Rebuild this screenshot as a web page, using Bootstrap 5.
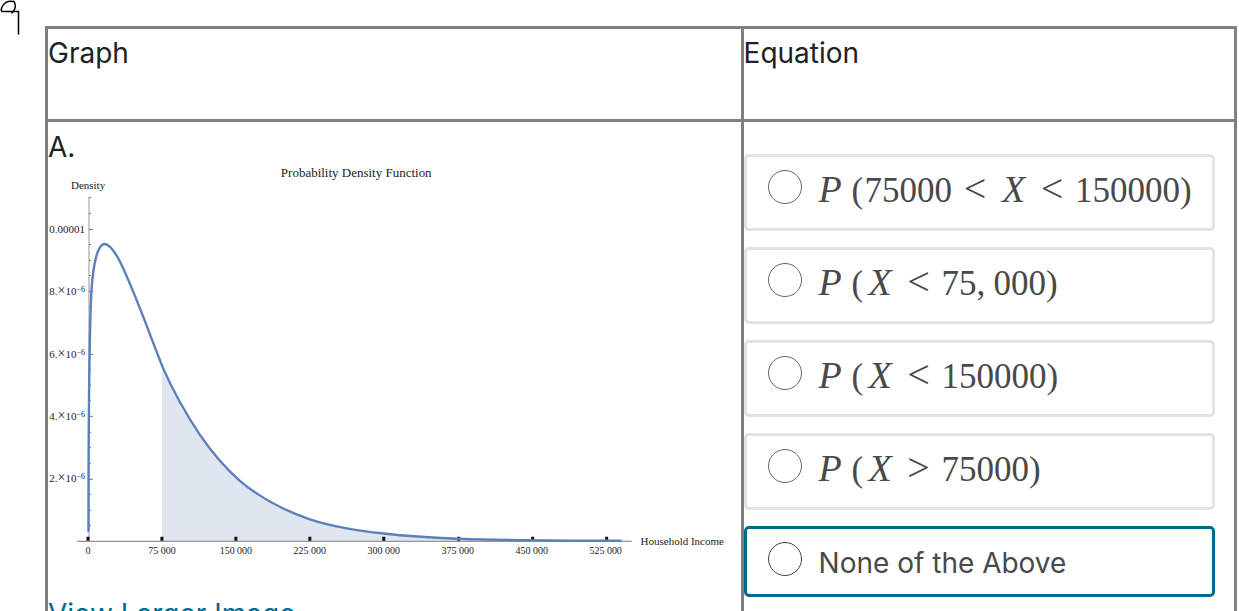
<!DOCTYPE html>
<html lang="en">
<head>
<meta charset="utf-8">
<meta name="viewport" content="width=device-width, initial-scale=1">
<title>Probability Density Function</title>
<link href="https://cdn.jsdelivr.net/npm/bootstrap@5.3.0/dist/css/bootstrap.min.css" rel="stylesheet">
<style>
  body { font: 400 28px/42px Inter, sans-serif; color: #202122; background: #fff; }
  .question-number { width: 45px; flex: none; }
  .sheet { padding: 26px 2px 0 0; }
  .match-table { border-collapse: collapse; table-layout: fixed; color: inherit; }
  .match-table th, .match-table td { border: 3px solid #808080; padding: 7px 0 0; font-weight: 400; vertical-align: top; text-align: left; }
  .match-table th { height: 93px; padding-top: 3px; }
  .graph-col { width: 58.5%; }
  .match-table td.answers { padding: 32px 19px 32px 0; }
  .row-name { line-height: 36px; }
  .larger-link { color: #006a8e; }
  .answer { border: 3px solid #e3e3e3; border-radius: 5px; height: 77px; padding: 0 21px; color: #494949; cursor: pointer; }
  .answer.focused { border-color: #006a8e; height: 71px; }
  .answer .form-check-input { width: 34px; height: 34px; margin: 13px 17px 0 0; border: 1px solid #666; flex: none; float: none; }
  .answer.focused .form-check-input { border-color: #444; }
  .answer-text { margin-top: 13px; }
  .formula { font: 35px/42px "Liberation Serif", serif; margin-top: 11px; white-space: nowrap; }
  .formula span, .formula i { display: inline-block; line-height: 42px; }
  .formula i { font-size: 38px; }
  .formula .fn { width: 33px; }
  .formula .var { width: 31px; text-align: center; }
  .formula .paren { width: 13px; }
  .formula .rel { width: 46px; text-align: center; font-size: 40px; }
  .formula .sep { width: 17px; }
  .chart { font-family: "Liberation Serif", serif; font-size: 10px; font-weight: 400; fill: #222; }
  .chart .title { font-size: 13px; }
  .chart .label, .chart .density { font-size: 11px; }
  .chart .times { font-size: 14px; }
  .chart .exp { font-size: 8px; }
</style>
</head>
<body>
<main class="d-flex vh-100 overflow-hidden">
  <svg class="question-number" height="40" viewBox="0 0 45 40" fill="none" stroke="#000" stroke-width="1.5" stroke-linecap="round" stroke-linejoin="round" role="img" aria-label="9">
    <path d="M14 1.500C9 .5 4.500 2.500 2.500 6C1 9 1 11 2 11.500L18.500 11.500V34M14 1.500C15.500 4 15.500 8 14 10.500L12 13"/>
  </svg>
  <div class="sheet flex-grow-1">
    <table class="match-table w-100">
      <colgroup><col class="graph-col"><col></colgroup>
      <thead><tr><th scope="col">Graph</th><th scope="col">Equation</th></tr></thead>
      <tbody>
      <tr>
        <td>
          <div class="row-name">A.</div>
          <svg class="chart d-block w-100" viewBox="48 165 693 428" role="img" aria-label="Probability density of household income, shaded from 75000">
            <path fill="#e0e6f0" d="M162 541V366L163 368C174 394 186 414 200 435C211 451 224 467 240 481C260 498 285 511 310 519.500C333 527 358 531 384 533.700C408 536.500 433 538 458 539V541Z"/>
            <path d="M89 197V541" stroke="#999" fill="none"/>
            <path id="ticks" stroke="#777" fill="none"/>
            <path d="M77 541.500H632" stroke="#777" fill="none"/>
            <path id="xticks" stroke="#111" stroke-width="3" fill="none"/>
            <path fill="none" stroke="#5b80ba" stroke-width="2.4" d="M88.500 532C88.500 440 89 340 91.500 290C93.500 262 98 244 104.500 244C114 244 125 271 139 306C147 326 155 348 163 368C174 393 186 414 200 435C211 451 224 467 240 481C260 498 285 511 310 519.500C333 527 358 531 384 533.700C408 536.500 433 538 458 539C510 541 565 541 622 541"/>
            <text class="title" x="281" y="177">Probability Density Function</text>
            <text class="label" x="71" y="189">Density</text>
            <g class="density" text-anchor="end">
              <text x="85" y="233">0.00001</text>
              <text x="85" y="295">8.<tspan class="times">×</tspan>10<tspan class="exp" dy="-3">−6</tspan></text>
              <text x="85" y="358">6.<tspan class="times">×</tspan>10<tspan class="exp" dy="-3">−6</tspan></text>
              <text x="85" y="420">4.<tspan class="times">×</tspan>10<tspan class="exp" dy="-3">−6</tspan></text>
              <text x="85" y="482">2.<tspan class="times">×</tspan>10<tspan class="exp" dy="-3">−6</tspan></text>
            </g>
            <g text-anchor="middle">
              <text x="88" y="554">0</text><text x="162" y="554">75 000</text><text x="236" y="554">150 000</text><text x="310" y="554">225 000</text>
              <text x="384" y="554">300 000</text><text x="458" y="554">375 000</text><text x="532" y="554">450 000</text><text x="606" y="554">525 000</text>
            </g>
            <text class="label" x="641" y="545">Household Income</text>
          </svg>
          <a href="#" class="larger-link text-decoration-none">View Larger Image</a>
        </td>
        <td class="answers">
          <div class="d-flex flex-column gap-3">
            <label class="answer d-flex align-items-start"><input class="form-check-input" type="radio" name="eq"><span class="formula"><i class="fn">P</i><span class="paren">(</span><span>75000</span><span class="rel">&lt;</span><i class="var">X</i><span class="rel">&lt;</span><span>150000</span><span class="paren">)</span></span></label>
            <label class="answer d-flex align-items-start"><input class="form-check-input" type="radio" name="eq"><span class="formula"><i class="fn">P</i><span class="paren">(</span><i class="var">X</i><span class="rel">&lt;</span><span>75</span><span class="sep">,</span><span>000</span><span class="paren">)</span></span></label>
            <label class="answer d-flex align-items-start"><input class="form-check-input" type="radio" name="eq"><span class="formula"><i class="fn">P</i><span class="paren">(</span><i class="var">X</i><span class="rel">&lt;</span><span>150000</span><span class="paren">)</span></span></label>
            <label class="answer d-flex align-items-start"><input class="form-check-input" type="radio" name="eq"><span class="formula"><i class="fn">P</i><span class="paren">(</span><i class="var">X</i><span class="rel">&gt;</span><span>75000</span><span class="paren">)</span></span></label>
            <label class="answer focused d-flex align-items-start"><input class="form-check-input" type="radio" name="eq"><span class="answer-text">None of the Above</span></label>
          </div>
        </td>
      </tr>
      </tbody>
    </table>
  </div>
</main>
<script src="https://cdn.jsdelivr.net/npm/bootstrap@5.3.0/dist/js/bootstrap.bundle.min.js"></script>
<script>
  // Axis ticks: every fourth density tick is a major one
  let d = '';
  for (let i = 1; i <= 22; i++) d += `M89 ${541.5 - Math.round(i * 15.62)}h${i % 4 ? 2 : 4}`;
  document.getElementById('ticks').setAttribute('d', d);
  let x = '';
  for (let i = 0; i < 8; i++) x += `M${88 + Math.round(i * 74.1)} 537v4`;
  document.getElementById('xticks').setAttribute('d', x);
</script>
</body>
</html>
